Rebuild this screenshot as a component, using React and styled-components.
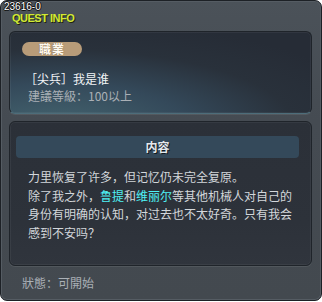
import React from "react";
import styled, { createGlobalStyle } from "styled-components";

const Global = createGlobalStyle`
  html, body { margin: 0; padding: 0; background: #ffffff; }
  * { box-sizing: border-box; }
  body { font-family: "Noto Sans CJK SC", "Noto Sans", sans-serif; }
`;

const Window = styled.div`
  width: 322px;
  height: 301px;
  border: 1px solid #1d2126;
  border-radius: 7px;
  background: linear-gradient(180deg, #4b5259 0%, #454b52 40%, #43494f 100%);
  box-shadow: inset 0 0 0 1px #555c63;
  padding: 0 9px 0 8px;
  display: flex;
  flex-direction: column;
`;

const IdLabel = styled.div`
  font-family: "Liberation Sans", Arial, sans-serif;
  font-size: 10px;
  line-height: 11px;
  color: #ffffff;
  margin-left: -5px;
  height: 11px;
  text-shadow: 1px 0 0 #111, -1px 0 0 #111, 0 1px 0 #111, 0 -1px 0 #111;
`;

const Title = styled.div`
  font-family: "Liberation Sans", Arial, sans-serif;
  font-weight: bold;
  font-size: 11px;
  line-height: 12px;
  color: #d2ea34;
  margin-left: 3px;
  height: 12px;
  text-shadow: 1px 1px 0 #20240f;
  letter-spacing: -0.5px;
`;

const Panel = styled.div`
  border: 1px solid #1f242a;
  border-radius: 6px;
  box-shadow: inset 0 0 0 1px rgba(255, 255, 255, 0.05), 0 1px 0 rgba(255,255,255,0.08);
`;

const JobPanel = styled(Panel)`
  margin-top: 7px;
  height: 83px;
  background: radial-gradient(ellipse 110% 130% at 15% 115%, #44646f 0%, #34495a 40%, #29313b 72%, #262c36 100%);
  border-bottom-color: #4d6d7a;
  padding: 10px 12px 0 12px;
  display: flex;
  flex-direction: column;
  align-items: flex-start;
`;

const Pill = styled.div`
  width: 60px;
  height: 14px;
  border-radius: 7px;
  background: #b89c79;
  color: #fffaf0;
  font-weight: bold;
  font-size: 12px;
  line-height: 14px;
  text-align: center;
  letter-spacing: 1px;
  text-shadow: 0 0 1px #6b5638;
`;

const QuestName = styled.div`
  margin-top: 15px;
  margin-left: 3px;
  font-size: 12px;
  line-height: 16px;
  color: #f2f4f6;
`;

const Req = styled.div`
  margin-top: 1px;
  margin-left: 6px;
  font-size: 12px;
  line-height: 16px;
  color: #aab0b6;
`;

const ContentPanel = styled(Panel)`
  margin-top: 7px;
  height: 145px;
  background: linear-gradient(180deg, #2b3038 0%, #2d323a 70%, #30353d 100%);
  padding: 14px 12px 0 6px;
  display: flex;
  flex-direction: column;
`;

const HeaderBar = styled.div`
  height: 22px;
  border-radius: 4px;
  background: #34495a;
  color: #e4e8ec;
  font-weight: bold;
  font-size: 12px;
  line-height: 22px;
  text-align: center;
  text-shadow: 1px 1px 0 #111820;
`;

const Body = styled.div`
  margin-top: 10px;
  padding-left: 12px;
  font-size: 12px;
  line-height: 18.5px;
  color: #d3d7db;
  white-space: nowrap;
`;

const Name = styled.span`
  color: #4ff2f6;
`;

const Status = styled.div`
  margin-top: 8px;
  margin-left: 13px;
  font-size: 12px;
  line-height: 18px;
  color: #aab0b6;
`;

export default function App() {
  return (
    <>
      <Global />
      <Window>
        <IdLabel>23616-0</IdLabel>
        <Title>QUEST INFO</Title>
        <JobPanel>
          <Pill>職業</Pill>
          <QuestName>［尖兵］我是谁</QuestName>
          <Req>建議等級：100以上</Req>
        </JobPanel>
        <ContentPanel>
          <HeaderBar>内容</HeaderBar>
          <Body>
            力里恢复了许多，但记忆仍未完全复原。
            <br />
            除了我之外，<Name>鲁提</Name>和<Name>维丽尔</Name>等其他机械人对自己的
            <br />
            身份有明确的认知，对过去也不太好奇。只有我会
            <br />
            感到不安吗？
          </Body>
        </ContentPanel>
        <Status>狀態：可開始</Status>
      </Window>
    </>
  );
}
